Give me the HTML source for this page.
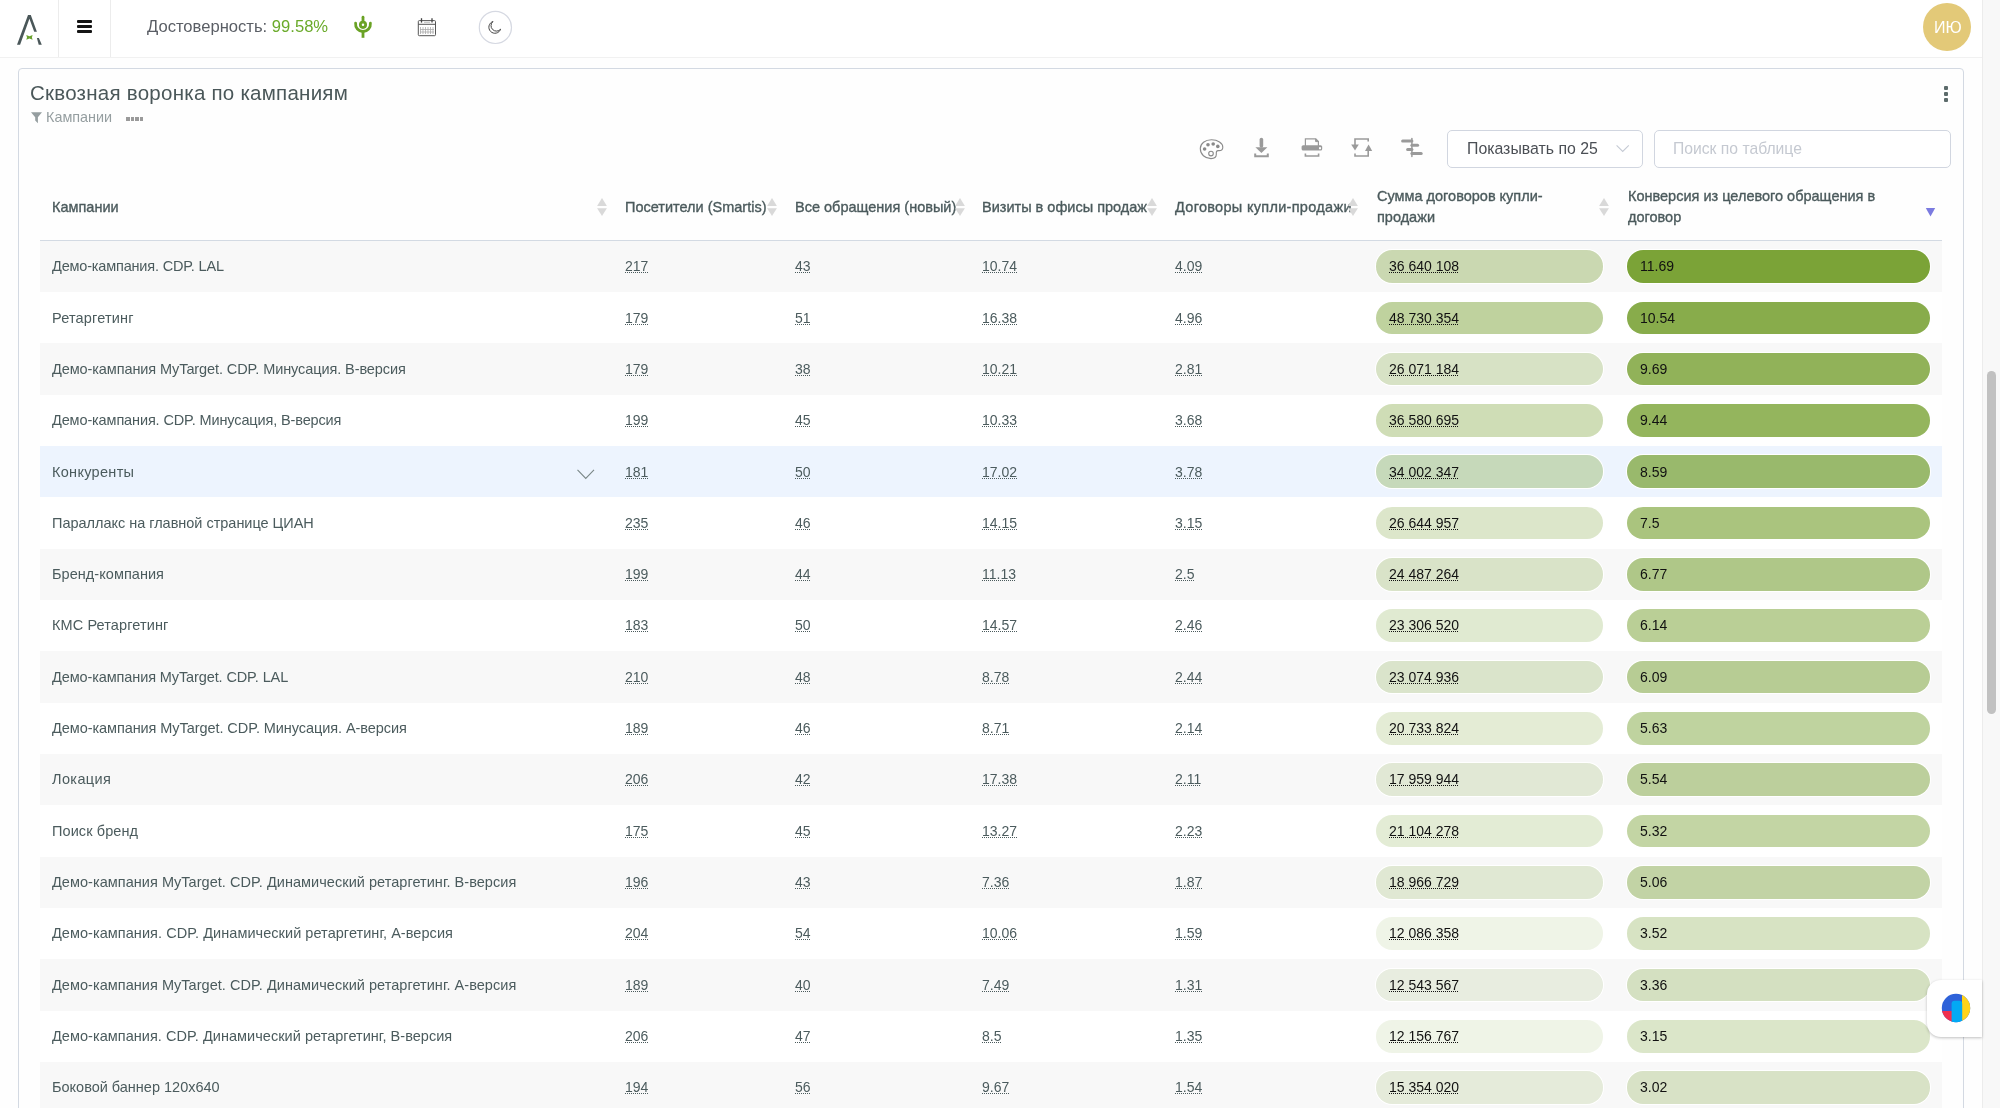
<!DOCTYPE html>
<html><head><meta charset="utf-8"><title>Сквозная воронка по кампаниям</title>
<style>
*{margin:0;padding:0;box-sizing:border-box}
html,body{width:2000px;height:1108px;overflow:hidden;background:#fefefe;font-family:"Liberation Sans", sans-serif}
.t{position:absolute;white-space:nowrap;will-change:transform}
.a{position:absolute}
.u{background:linear-gradient(to right,currentColor 50%,transparent 50%) 0 calc(100% - 1px)/2px 1px repeat-x}
</style></head>
<body>
<div class="a" style="left:0;top:0;width:1982px;height:58px;background:#fff;border-bottom:1px solid #f1f1f1"></div>
<div class="a" style="left:58px;top:0;width:1px;height:57px;background:#ececec"></div>
<div class="a" style="left:110px;top:0;width:1px;height:57px;background:#ececec"></div>
<svg class="a" style="left:0;top:0" width="60" height="57" viewBox="0 0 60 57">
<polygon points="17,44.7 28,15 30.8,15 36.9,31.7 34.2,31.7 29.42,18.83 20.1,44.7" fill="#4a5759"/>
<polygon points="36.9,38 38.9,38 41.8,44.7 38.7,44.7" fill="#4a5759"/>
<polygon points="26.3,35 29.45,36.2 32.6,35 31.9,37.4 32.6,39.8 29.45,38.6 26.3,39.8 27,37.4" fill="#6aa22e"/>
</svg>
<div class="a" style="left:77px;top:20.4px;width:14.6px;height:2.2px;background:#151515;border-radius:1px"></div>
<div class="a" style="left:77px;top:25.4px;width:14.6px;height:2.2px;background:#151515;border-radius:1px"></div>
<div class="a" style="left:77px;top:30.4px;width:14.6px;height:2.2px;background:#151515;border-radius:1px"></div>
<div class="t " style="left:146.50px;top:17px;font-size:16.6px;line-height:20px;color:#5a5e65;font-weight:400;">Достоверность: <span style="color:#6aaa2a">99.58%</span></div>
<svg class="a" style="left:340px;top:0" width="50" height="57" viewBox="340 0 50 57">
<g fill="none" stroke="#6aa225" stroke-width="2.8">
<path d="M363 17.2 V21" stroke-linecap="round"/>
<circle cx="363" cy="24.85" r="2.65"/>
<path d="M355.6 23.2 A7.45 7.45 0 1 0 370.4 23.2" stroke-linecap="round"/>
<path d="M363 32 V37.8"/>
</g></svg>
<svg class="a" style="left:410px;top:10px" width="34" height="34" viewBox="410 10 34 34">
<g fill="none" stroke="#555" stroke-width="1">
<rect x="418.3" y="20.6" width="17.2" height="15.1" rx="1"/>
<line x1="418.3" y1="24.3" x2="435.5" y2="24.3"/>
</g>
<g stroke="#444" stroke-width="1.3"><line x1="421.5" y1="18.2" x2="421.5" y2="22.6"/><line x1="432" y1="18.2" x2="432" y2="22.6"/></g>
<g stroke="#aaa" stroke-width="0.8">
<line x1="424" y1="22.3" x2="430" y2="22.3"/>
<line x1="420.5" y1="27" x2="420.5" y2="34"/><line x1="423" y1="27" x2="423" y2="34"/><line x1="425.5" y1="27" x2="425.5" y2="34"/>
<line x1="428" y1="27" x2="428" y2="34"/><line x1="430.5" y1="27" x2="430.5" y2="34"/><line x1="433" y1="27" x2="433" y2="34"/>
<line x1="420" y1="29.5" x2="434" y2="29.5"/><line x1="420" y1="32" x2="434" y2="32"/>
</g></svg>
<svg class="a" style="left:476px;top:8px" width="40" height="40" viewBox="476 8 40 40"><circle cx="495.4" cy="27.4" r="16.1" fill="none" stroke="#d6d9e2" stroke-width="1.2"/></svg>
<svg class="a" style="left:480px;top:12px" width="30" height="30" viewBox="480 12 30 30">
<path d="M493 21.5 A6.03 6.03 0 1 0 500.6 29.2 A5.43 5.43 0 1 1 493 21.5 Z" fill="none" stroke="#444" stroke-width="1"/>
</svg>
<div class="a" style="left:1922.5px;top:3.3px;width:48px;height:48px;border-radius:50%;background:#e3c978"></div>
<div class="t " style="left:1934.00px;top:18px;font-size:16px;line-height:20px;color:#ffffff;font-weight:400;">ИЮ</div>
<div class="a" style="left:1982px;top:0;width:18px;height:1108px;background:#f8f8f8;border-left:1px solid #ececec"></div>
<div class="a" style="left:1987px;top:371px;width:9px;height:343px;border-radius:4.5px;background:#c1c1c1"></div>
<div class="a" style="left:18px;top:68px;width:1946px;height:1100px;background:#fefefe;border:1px solid #d3d9e2;border-radius:4px"></div>
<div class="t " style="left:30.40px;top:80px;font-size:20.5px;line-height:26px;color:#4a5759;font-weight:400;letter-spacing:0.25px">Сквозная воронка по кампаниям</div>
<svg class="a" style="left:28px;top:108px" width="18" height="18" viewBox="28 108 18 18">
<path d="M31 112.3 H42 L37.9 117.2 V123.2 L35.2 120.6 V117.2 Z" fill="#959ea0"/></svg>
<div class="t " style="left:45.80px;top:107px;font-size:14.4px;line-height:20px;color:#959ea0;font-weight:400;">Кампании</div>
<div class="a" style="left:126.1px;top:116.7px;width:3.6px;height:4.2px;background:#9a9a9a"></div>
<div class="a" style="left:130.7px;top:116.7px;width:3.6px;height:4.2px;background:#9a9a9a"></div>
<div class="a" style="left:135.3px;top:116.7px;width:3.6px;height:4.2px;background:#9a9a9a"></div>
<div class="a" style="left:139.9px;top:116.7px;width:3.6px;height:4.2px;background:#9a9a9a"></div>
<div class="a" style="left:1944.4px;top:86.4px;width:4px;height:4px;border-radius:1px;background:#5c6b6b"></div>
<div class="a" style="left:1944.4px;top:92.1px;width:4px;height:4px;border-radius:1px;background:#5c6b6b"></div>
<div class="a" style="left:1944.4px;top:97.8px;width:4px;height:4px;border-radius:1px;background:#5c6b6b"></div>
<svg class="a" style="left:1190px;top:130px" width="240" height="35" viewBox="1190 130 240 35">
<g fill="none" stroke="#8a8a8a" stroke-width="1.1">
<path d="M1211.5 139.8 C1217.8 139.8 1222.8 143 1222.8 147.2 C1222.8 149.6 1221 150.6 1219 150.6 L1218 150.6 C1216.6 150.6 1216.3 151.6 1216.3 152.8 L1216.3 154.6 C1216.3 157.2 1214.4 158.6 1211 158.6 C1205 158.6 1200.3 154.4 1200.3 148.6 C1200.3 143.4 1205.2 139.8 1211.5 139.8 Z"/>
<circle cx="1211" cy="153.6" r="2.3"/>
</g>
<g fill="#8a8a8a"><circle cx="1204.6" cy="149" r="1.8"/><circle cx="1208" cy="144.8" r="1.8"/><circle cx="1213.2" cy="144" r="1.8"/><circle cx="1217.8" cy="146.4" r="1.8"/></g>
<g fill="#9a9a9a" stroke="none">
<rect x="1259.6" y="137.8" width="3.6" height="10" rx="1.8"/>
<polygon points="1255.4,147.2 1267.4,147.2 1261.4,152.9"/>
</g>
<path d="M1255.2 153.4 V156.2 H1267.8 V153.4" fill="none" stroke="#9a9a9a" stroke-width="2"/>
<path d="M1305.4 146 V138.8 H1315.8 L1318.4 141.4 V146" fill="none" stroke="#9a9a9a" stroke-width="1.2"/>
<path d="M1315.6 138.8 V141.6 H1318.4" fill="#9a9a9a" stroke="#9a9a9a" stroke-width="1"/>
<rect x="1301.6" y="145.2" width="20.6" height="5.4" rx="1.6" fill="#9a9a9a"/>
<rect x="1319" y="147.2" width="2" height="2" fill="#fff"/>
<path d="M1305.4 153.4 V156 H1318.6 V153.4" fill="none" stroke="#9a9a9a" stroke-width="1.6"/>
<g fill="none" stroke="#9a9a9a" stroke-width="1.6">
<path d="M1355 145 V139 H1368.2 V141.4"/>
<path d="M1355 153.4 V156 H1368.2 V150.6"/>
</g>
<g fill="#9a9a9a"><polygon points="1351.2,144.4 1358.8,144.4 1355,150.5"/><polygon points="1365,151 1372.2,151 1368.6,144.6"/></g>
<g stroke="#9a9a9a" stroke-linecap="round">
<line x1="1411.9" y1="138.4" x2="1411.9" y2="156.4" stroke-width="1.5"/>
<line x1="1402.6" y1="141.1" x2="1411.9" y2="141.1" stroke-width="3"/>
<line x1="1411.9" y1="145.2" x2="1417.6" y2="145.2" stroke-width="3"/>
<line x1="1407.6" y1="149.4" x2="1411.9" y2="149.4" stroke-width="3"/>
<line x1="1411.9" y1="153.6" x2="1421.2" y2="153.6" stroke-width="3"/>
</g>
</svg>
<div class="a" style="left:1447px;top:130px;width:196px;height:37.5px;border:1.6px solid #d1d6e0;border-radius:5px;background:#fff"></div>
<div class="t " style="left:1466.50px;top:139px;font-size:15.85px;line-height:20px;color:#4b4f55;font-weight:400;">Показывать по 25</div>
<svg class="a" style="left:1610px;top:140px" width="26" height="16" viewBox="1610 140 26 16">
<path d="M1616.6 145.4 L1622.7 151.4 L1628.8 145.4" fill="none" stroke="#c5cad4" stroke-width="1.1"/></svg>
<div class="a" style="left:1654px;top:130px;width:297px;height:37.5px;border:1.6px solid #d1d6e0;border-radius:5px;background:#fff"></div>
<div class="t " style="left:1672.60px;top:139px;font-size:15.7px;line-height:20px;color:#c5c9d1;font-weight:400;">Поиск по таблице</div>
<div class="t " style="left:51.50px;top:197px;font-size:14.5px;line-height:20px;color:#4b5a5c;font-weight:400;-webkit-text-stroke:0.35px currentColor">Кампании</div>
<svg class="a" style="left:595.7px;top:197.4px" width="12" height="20" viewBox="0 0 12 20"><polygon points="1.1,9.1 10.9,9.1 6,1" fill="#d9d9d9"/><polygon points="1.1,11.2 10.9,11.2 6,18.9" fill="#d9d9d9"/></svg>
<div class="t " style="left:625.20px;top:197px;font-size:14.5px;line-height:20px;color:#4b5a5c;font-weight:400;-webkit-text-stroke:0.35px currentColor">Посетители (Smartis)</div>
<svg class="a" style="left:766.0px;top:197.4px" width="12" height="20" viewBox="0 0 12 20"><polygon points="1.1,9.1 10.9,9.1 6,1" fill="#d9d9d9"/><polygon points="1.1,11.2 10.9,11.2 6,18.9" fill="#d9d9d9"/></svg>
<div class="t " style="left:795.40px;top:197px;font-size:14.5px;line-height:20px;color:#4b5a5c;font-weight:400;-webkit-text-stroke:0.35px currentColor">Все обращения (новый)</div>
<svg class="a" style="left:953.5px;top:197.4px" width="12" height="20" viewBox="0 0 12 20"><polygon points="1.1,9.1 10.9,9.1 6,1" fill="#d9d9d9"/><polygon points="1.1,11.2 10.9,11.2 6,18.9" fill="#d9d9d9"/></svg>
<div class="t " style="left:981.60px;top:197px;font-size:14.5px;line-height:20px;color:#4b5a5c;font-weight:400;-webkit-text-stroke:0.35px currentColor">Визиты в офисы продаж</div>
<svg class="a" style="left:1146.0px;top:197.4px" width="12" height="20" viewBox="0 0 12 20"><polygon points="1.1,9.1 10.9,9.1 6,1" fill="#d9d9d9"/><polygon points="1.1,11.2 10.9,11.2 6,18.9" fill="#d9d9d9"/></svg>
<div class="t " style="left:1175.10px;top:197px;font-size:14.5px;line-height:20px;color:#4b5a5c;font-weight:400;-webkit-text-stroke:0.35px currentColor;letter-spacing:0.3px">Договоры купли-продажи</div>
<svg class="a" style="left:1347.2px;top:197.4px" width="12" height="20" viewBox="0 0 12 20"><polygon points="1.1,9.1 10.9,9.1 6,1" fill="#d9d9d9"/><polygon points="1.1,11.2 10.9,11.2 6,18.9" fill="#d9d9d9"/></svg>
<div class="t " style="left:1376.80px;top:186px;font-size:14.5px;line-height:20px;color:#4b5a5c;font-weight:400;-webkit-text-stroke:0.35px currentColor">Сумма договоров купли-</div>
<div class="t " style="left:1376.80px;top:207px;font-size:14.5px;line-height:20px;color:#4b5a5c;font-weight:400;-webkit-text-stroke:0.35px currentColor">продажи</div>
<svg class="a" style="left:1598.0px;top:197.4px" width="12" height="20" viewBox="0 0 12 20"><polygon points="1.1,9.1 10.9,9.1 6,1" fill="#d9d9d9"/><polygon points="1.1,11.2 10.9,11.2 6,18.9" fill="#d9d9d9"/></svg>
<div class="t " style="left:1628.00px;top:186px;font-size:14.5px;line-height:20px;color:#4b5a5c;font-weight:400;-webkit-text-stroke:0.35px currentColor">Конверсия из целевого обращения в</div>
<div class="t " style="left:1628.00px;top:207px;font-size:14.5px;line-height:20px;color:#4b5a5c;font-weight:400;-webkit-text-stroke:0.35px currentColor">договор</div>
<svg class="a" style="left:1924px;top:206px" width="14" height="12" viewBox="1924 206 14 12">
<polygon points="1925.8,208 1935.2,208 1930.5,216.4" fill="#7b7be0"/></svg>
<div class="a" style="left:40px;top:240px;width:1902px;height:1px;background:#d3dae3"></div>
<div class="a" style="left:40px;top:240.80px;width:1902px;height:51.32px;background:#f8f8f8"></div>
<div class="t " style="left:52.00px;top:256px;font-size:14.5px;line-height:20px;color:#4b5b5d;font-weight:400;letter-spacing:-0.182px">Демо-кампания. CDP. LAL</div>
<div class="t " style="left:625.00px;top:256px;font-size:14px;line-height:20px;color:#4b5b5d;font-weight:400;"><span class="u">217</span></div>
<div class="t " style="left:795.00px;top:256px;font-size:14px;line-height:20px;color:#4b5b5d;font-weight:400;"><span class="u">43</span></div>
<div class="t " style="left:981.80px;top:256px;font-size:14px;line-height:20px;color:#4b5b5d;font-weight:400;"><span class="u">10.74</span></div>
<div class="t " style="left:1174.80px;top:256px;font-size:14px;line-height:20px;color:#4b5b5d;font-weight:400;"><span class="u">4.09</span></div>
<div class="a" style="left:1375.9px;top:250.20px;width:227.5px;height:32.5px;border-radius:16.25px;background:rgba(123,163,55,0.366);box-shadow:0 0 0 1px #fff"></div>
<div class="a" style="left:1627.4px;top:250.20px;width:302.5px;height:32.5px;border-radius:16.25px;background:rgba(123,163,55,1.000);box-shadow:0 0 0 1px #fff"></div>
<div class="t " style="left:1388.60px;top:256px;font-size:14px;line-height:20px;color:#111;font-weight:400;"><span class="u">36 640 108</span></div>
<div class="t " style="left:1639.60px;top:256px;font-size:14px;line-height:20px;color:#111;font-weight:400;">11.69</div>
<div class="a" style="left:40px;top:292.12px;width:1902px;height:51.32px;background:#ffffff"></div>
<div class="t " style="left:52.00px;top:308px;font-size:14.5px;line-height:20px;color:#4b5b5d;font-weight:400;letter-spacing:0.170px">Ретаргетинг</div>
<div class="t " style="left:625.00px;top:308px;font-size:14px;line-height:20px;color:#4b5b5d;font-weight:400;"><span class="u">179</span></div>
<div class="t " style="left:795.00px;top:308px;font-size:14px;line-height:20px;color:#4b5b5d;font-weight:400;"><span class="u">51</span></div>
<div class="t " style="left:981.80px;top:308px;font-size:14px;line-height:20px;color:#4b5b5d;font-weight:400;"><span class="u">16.38</span></div>
<div class="t " style="left:1174.80px;top:308px;font-size:14px;line-height:20px;color:#4b5b5d;font-weight:400;"><span class="u">4.96</span></div>
<div class="a" style="left:1375.9px;top:301.52px;width:227.5px;height:32.5px;border-radius:16.25px;background:rgba(123,163,55,0.487);box-shadow:0 0 0 1px #fff"></div>
<div class="a" style="left:1627.4px;top:301.52px;width:302.5px;height:32.5px;border-radius:16.25px;background:rgba(123,163,55,0.902);box-shadow:0 0 0 1px #fff"></div>
<div class="t " style="left:1388.60px;top:308px;font-size:14px;line-height:20px;color:#111;font-weight:400;"><span class="u">48 730 354</span></div>
<div class="t " style="left:1639.60px;top:308px;font-size:14px;line-height:20px;color:#111;font-weight:400;">10.54</div>
<div class="a" style="left:40px;top:343.44px;width:1902px;height:51.32px;background:#f8f8f8"></div>
<div class="t " style="left:52.00px;top:359px;font-size:14.5px;line-height:20px;color:#4b5b5d;font-weight:400;letter-spacing:-0.091px">Демо-кампания MyTarget. CDP. Минусация. B-версия</div>
<div class="t " style="left:625.00px;top:359px;font-size:14px;line-height:20px;color:#4b5b5d;font-weight:400;"><span class="u">179</span></div>
<div class="t " style="left:795.00px;top:359px;font-size:14px;line-height:20px;color:#4b5b5d;font-weight:400;"><span class="u">38</span></div>
<div class="t " style="left:981.80px;top:359px;font-size:14px;line-height:20px;color:#4b5b5d;font-weight:400;"><span class="u">10.21</span></div>
<div class="t " style="left:1174.80px;top:359px;font-size:14px;line-height:20px;color:#4b5b5d;font-weight:400;"><span class="u">2.81</span></div>
<div class="a" style="left:1375.9px;top:352.84px;width:227.5px;height:32.5px;border-radius:16.25px;background:rgba(123,163,55,0.261);box-shadow:0 0 0 1px #fff"></div>
<div class="a" style="left:1627.4px;top:352.84px;width:302.5px;height:32.5px;border-radius:16.25px;background:rgba(123,163,55,0.829);box-shadow:0 0 0 1px #fff"></div>
<div class="t " style="left:1388.60px;top:359px;font-size:14px;line-height:20px;color:#111;font-weight:400;"><span class="u">26 071 184</span></div>
<div class="t " style="left:1639.60px;top:359px;font-size:14px;line-height:20px;color:#111;font-weight:400;">9.69</div>
<div class="a" style="left:40px;top:394.76px;width:1902px;height:51.32px;background:#ffffff"></div>
<div class="t " style="left:52.00px;top:410px;font-size:14.5px;line-height:20px;color:#4b5b5d;font-weight:400;letter-spacing:-0.132px">Демо-кампания. CDP. Минусация, B-версия</div>
<div class="t " style="left:625.00px;top:410px;font-size:14px;line-height:20px;color:#4b5b5d;font-weight:400;"><span class="u">199</span></div>
<div class="t " style="left:795.00px;top:410px;font-size:14px;line-height:20px;color:#4b5b5d;font-weight:400;"><span class="u">45</span></div>
<div class="t " style="left:981.80px;top:410px;font-size:14px;line-height:20px;color:#4b5b5d;font-weight:400;"><span class="u">10.33</span></div>
<div class="t " style="left:1174.80px;top:410px;font-size:14px;line-height:20px;color:#4b5b5d;font-weight:400;"><span class="u">3.68</span></div>
<div class="a" style="left:1375.9px;top:404.16px;width:227.5px;height:32.5px;border-radius:16.25px;background:rgba(123,163,55,0.366);box-shadow:0 0 0 1px #fff"></div>
<div class="a" style="left:1627.4px;top:404.16px;width:302.5px;height:32.5px;border-radius:16.25px;background:rgba(123,163,55,0.808);box-shadow:0 0 0 1px #fff"></div>
<div class="t " style="left:1388.60px;top:410px;font-size:14px;line-height:20px;color:#111;font-weight:400;"><span class="u">36 580 695</span></div>
<div class="t " style="left:1639.60px;top:410px;font-size:14px;line-height:20px;color:#111;font-weight:400;">9.44</div>
<div class="a" style="left:40px;top:446.08px;width:1902px;height:51.32px;background:#edf4fe"></div>
<div class="t " style="left:52.00px;top:462px;font-size:14.5px;line-height:20px;color:#4b5b5d;font-weight:400;letter-spacing:0.300px">Конкуренты</div>
<div class="t " style="left:625.00px;top:462px;font-size:14px;line-height:20px;color:#4b5b5d;font-weight:400;"><span class="u">181</span></div>
<div class="t " style="left:795.00px;top:462px;font-size:14px;line-height:20px;color:#4b5b5d;font-weight:400;"><span class="u">50</span></div>
<div class="t " style="left:981.80px;top:462px;font-size:14px;line-height:20px;color:#4b5b5d;font-weight:400;"><span class="u">17.02</span></div>
<div class="t " style="left:1174.80px;top:462px;font-size:14px;line-height:20px;color:#4b5b5d;font-weight:400;"><span class="u">3.78</span></div>
<svg class="a" style="left:575px;top:466.1px" width="22" height="14" viewBox="575 466.1 22 14">
<path d="M577.5 470.08 L585.75 478.58 L594 470.08" fill="none" stroke="#7a8787" stroke-width="1.1"/></svg>
<div class="a" style="left:1375.9px;top:455.48px;width:227.5px;height:32.5px;border-radius:16.25px;background:rgba(123,163,55,0.340);box-shadow:0 0 0 1px #fff"></div>
<div class="a" style="left:1627.4px;top:455.48px;width:302.5px;height:32.5px;border-radius:16.25px;background:rgba(123,163,55,0.735);box-shadow:0 0 0 1px #fff"></div>
<div class="t " style="left:1388.60px;top:462px;font-size:14px;line-height:20px;color:#111;font-weight:400;"><span class="u">34 002 347</span></div>
<div class="t " style="left:1639.60px;top:462px;font-size:14px;line-height:20px;color:#111;font-weight:400;">8.59</div>
<div class="a" style="left:40px;top:497.40px;width:1902px;height:51.32px;background:#ffffff"></div>
<div class="t " style="left:52.00px;top:513px;font-size:14.5px;line-height:20px;color:#4b5b5d;font-weight:400;letter-spacing:-0.021px">Параллакс на главной странице ЦИАН</div>
<div class="t " style="left:625.00px;top:513px;font-size:14px;line-height:20px;color:#4b5b5d;font-weight:400;"><span class="u">235</span></div>
<div class="t " style="left:795.00px;top:513px;font-size:14px;line-height:20px;color:#4b5b5d;font-weight:400;"><span class="u">46</span></div>
<div class="t " style="left:981.80px;top:513px;font-size:14px;line-height:20px;color:#4b5b5d;font-weight:400;"><span class="u">14.15</span></div>
<div class="t " style="left:1174.80px;top:513px;font-size:14px;line-height:20px;color:#4b5b5d;font-weight:400;"><span class="u">3.15</span></div>
<div class="a" style="left:1375.9px;top:506.80px;width:227.5px;height:32.5px;border-radius:16.25px;background:rgba(123,163,55,0.266);box-shadow:0 0 0 1px #fff"></div>
<div class="a" style="left:1627.4px;top:506.80px;width:302.5px;height:32.5px;border-radius:16.25px;background:rgba(123,163,55,0.642);box-shadow:0 0 0 1px #fff"></div>
<div class="t " style="left:1388.60px;top:513px;font-size:14px;line-height:20px;color:#111;font-weight:400;"><span class="u">26 644 957</span></div>
<div class="t " style="left:1639.60px;top:513px;font-size:14px;line-height:20px;color:#111;font-weight:400;">7.5</div>
<div class="a" style="left:40px;top:548.72px;width:1902px;height:51.32px;background:#f8f8f8"></div>
<div class="t " style="left:52.00px;top:564px;font-size:14.5px;line-height:20px;color:#4b5b5d;font-weight:400;letter-spacing:0.046px">Бренд-компания</div>
<div class="t " style="left:625.00px;top:564px;font-size:14px;line-height:20px;color:#4b5b5d;font-weight:400;"><span class="u">199</span></div>
<div class="t " style="left:795.00px;top:564px;font-size:14px;line-height:20px;color:#4b5b5d;font-weight:400;"><span class="u">44</span></div>
<div class="t " style="left:981.80px;top:564px;font-size:14px;line-height:20px;color:#4b5b5d;font-weight:400;"><span class="u">11.13</span></div>
<div class="t " style="left:1174.80px;top:564px;font-size:14px;line-height:20px;color:#4b5b5d;font-weight:400;"><span class="u">2.5</span></div>
<div class="a" style="left:1375.9px;top:558.12px;width:227.5px;height:32.5px;border-radius:16.25px;background:rgba(123,163,55,0.245);box-shadow:0 0 0 1px #fff"></div>
<div class="a" style="left:1627.4px;top:558.12px;width:302.5px;height:32.5px;border-radius:16.25px;background:rgba(123,163,55,0.579);box-shadow:0 0 0 1px #fff"></div>
<div class="t " style="left:1388.60px;top:564px;font-size:14px;line-height:20px;color:#111;font-weight:400;"><span class="u">24 487 264</span></div>
<div class="t " style="left:1639.60px;top:564px;font-size:14px;line-height:20px;color:#111;font-weight:400;">6.77</div>
<div class="a" style="left:40px;top:600.04px;width:1902px;height:51.32px;background:#ffffff"></div>
<div class="t " style="left:52.00px;top:615px;font-size:14.5px;line-height:20px;color:#4b5b5d;font-weight:400;letter-spacing:0.107px">КМС Ретаргетинг</div>
<div class="t " style="left:625.00px;top:615px;font-size:14px;line-height:20px;color:#4b5b5d;font-weight:400;"><span class="u">183</span></div>
<div class="t " style="left:795.00px;top:615px;font-size:14px;line-height:20px;color:#4b5b5d;font-weight:400;"><span class="u">50</span></div>
<div class="t " style="left:981.80px;top:615px;font-size:14px;line-height:20px;color:#4b5b5d;font-weight:400;"><span class="u">14.57</span></div>
<div class="t " style="left:1174.80px;top:615px;font-size:14px;line-height:20px;color:#4b5b5d;font-weight:400;"><span class="u">2.46</span></div>
<div class="a" style="left:1375.9px;top:609.44px;width:227.5px;height:32.5px;border-radius:16.25px;background:rgba(123,163,55,0.233);box-shadow:0 0 0 1px #fff"></div>
<div class="a" style="left:1627.4px;top:609.44px;width:302.5px;height:32.5px;border-radius:16.25px;background:rgba(123,163,55,0.525);box-shadow:0 0 0 1px #fff"></div>
<div class="t " style="left:1388.60px;top:615px;font-size:14px;line-height:20px;color:#111;font-weight:400;"><span class="u">23 306 520</span></div>
<div class="t " style="left:1639.60px;top:615px;font-size:14px;line-height:20px;color:#111;font-weight:400;">6.14</div>
<div class="a" style="left:40px;top:651.36px;width:1902px;height:51.32px;background:#f8f8f8"></div>
<div class="t " style="left:52.00px;top:667px;font-size:14.5px;line-height:20px;color:#4b5b5d;font-weight:400;letter-spacing:-0.110px">Демо-кампания MyTarget. CDP. LAL</div>
<div class="t " style="left:625.00px;top:667px;font-size:14px;line-height:20px;color:#4b5b5d;font-weight:400;"><span class="u">210</span></div>
<div class="t " style="left:795.00px;top:667px;font-size:14px;line-height:20px;color:#4b5b5d;font-weight:400;"><span class="u">48</span></div>
<div class="t " style="left:981.80px;top:667px;font-size:14px;line-height:20px;color:#4b5b5d;font-weight:400;"><span class="u">8.78</span></div>
<div class="t " style="left:1174.80px;top:667px;font-size:14px;line-height:20px;color:#4b5b5d;font-weight:400;"><span class="u">2.44</span></div>
<div class="a" style="left:1375.9px;top:660.76px;width:227.5px;height:32.5px;border-radius:16.25px;background:rgba(123,163,55,0.231);box-shadow:0 0 0 1px #fff"></div>
<div class="a" style="left:1627.4px;top:660.76px;width:302.5px;height:32.5px;border-radius:16.25px;background:rgba(123,163,55,0.521);box-shadow:0 0 0 1px #fff"></div>
<div class="t " style="left:1388.60px;top:667px;font-size:14px;line-height:20px;color:#111;font-weight:400;"><span class="u">23 074 936</span></div>
<div class="t " style="left:1639.60px;top:667px;font-size:14px;line-height:20px;color:#111;font-weight:400;">6.09</div>
<div class="a" style="left:40px;top:702.68px;width:1902px;height:51.32px;background:#ffffff"></div>
<div class="t " style="left:52.00px;top:718px;font-size:14.5px;line-height:20px;color:#4b5b5d;font-weight:400;letter-spacing:-0.070px">Демо-кампания MyTarget. CDP. Минусация. A-версия</div>
<div class="t " style="left:625.00px;top:718px;font-size:14px;line-height:20px;color:#4b5b5d;font-weight:400;"><span class="u">189</span></div>
<div class="t " style="left:795.00px;top:718px;font-size:14px;line-height:20px;color:#4b5b5d;font-weight:400;"><span class="u">46</span></div>
<div class="t " style="left:981.80px;top:718px;font-size:14px;line-height:20px;color:#4b5b5d;font-weight:400;"><span class="u">8.71</span></div>
<div class="t " style="left:1174.80px;top:718px;font-size:14px;line-height:20px;color:#4b5b5d;font-weight:400;"><span class="u">2.14</span></div>
<div class="a" style="left:1375.9px;top:712.08px;width:227.5px;height:32.5px;border-radius:16.25px;background:rgba(123,163,55,0.207);box-shadow:0 0 0 1px #fff"></div>
<div class="a" style="left:1627.4px;top:712.08px;width:302.5px;height:32.5px;border-radius:16.25px;background:rgba(123,163,55,0.482);box-shadow:0 0 0 1px #fff"></div>
<div class="t " style="left:1388.60px;top:718px;font-size:14px;line-height:20px;color:#111;font-weight:400;"><span class="u">20 733 824</span></div>
<div class="t " style="left:1639.60px;top:718px;font-size:14px;line-height:20px;color:#111;font-weight:400;">5.63</div>
<div class="a" style="left:40px;top:754.00px;width:1902px;height:51.32px;background:#f8f8f8"></div>
<div class="t " style="left:52.00px;top:769px;font-size:14.5px;line-height:20px;color:#4b5b5d;font-weight:400;letter-spacing:0.383px">Локация</div>
<div class="t " style="left:625.00px;top:769px;font-size:14px;line-height:20px;color:#4b5b5d;font-weight:400;"><span class="u">206</span></div>
<div class="t " style="left:795.00px;top:769px;font-size:14px;line-height:20px;color:#4b5b5d;font-weight:400;"><span class="u">42</span></div>
<div class="t " style="left:981.80px;top:769px;font-size:14px;line-height:20px;color:#4b5b5d;font-weight:400;"><span class="u">17.38</span></div>
<div class="t " style="left:1174.80px;top:769px;font-size:14px;line-height:20px;color:#4b5b5d;font-weight:400;"><span class="u">2.11</span></div>
<div class="a" style="left:1375.9px;top:763.40px;width:227.5px;height:32.5px;border-radius:16.25px;background:rgba(123,163,55,0.180);box-shadow:0 0 0 1px #fff"></div>
<div class="a" style="left:1627.4px;top:763.40px;width:302.5px;height:32.5px;border-radius:16.25px;background:rgba(123,163,55,0.474);box-shadow:0 0 0 1px #fff"></div>
<div class="t " style="left:1388.60px;top:769px;font-size:14px;line-height:20px;color:#111;font-weight:400;"><span class="u">17 959 944</span></div>
<div class="t " style="left:1639.60px;top:769px;font-size:14px;line-height:20px;color:#111;font-weight:400;">5.54</div>
<div class="a" style="left:40px;top:805.32px;width:1902px;height:51.32px;background:#ffffff"></div>
<div class="t " style="left:52.00px;top:821px;font-size:14.5px;line-height:20px;color:#4b5b5d;font-weight:400;letter-spacing:0.090px">Поиск бренд</div>
<div class="t " style="left:625.00px;top:821px;font-size:14px;line-height:20px;color:#4b5b5d;font-weight:400;"><span class="u">175</span></div>
<div class="t " style="left:795.00px;top:821px;font-size:14px;line-height:20px;color:#4b5b5d;font-weight:400;"><span class="u">45</span></div>
<div class="t " style="left:981.80px;top:821px;font-size:14px;line-height:20px;color:#4b5b5d;font-weight:400;"><span class="u">13.27</span></div>
<div class="t " style="left:1174.80px;top:821px;font-size:14px;line-height:20px;color:#4b5b5d;font-weight:400;"><span class="u">2.23</span></div>
<div class="a" style="left:1375.9px;top:814.72px;width:227.5px;height:32.5px;border-radius:16.25px;background:rgba(123,163,55,0.211);box-shadow:0 0 0 1px #fff"></div>
<div class="a" style="left:1627.4px;top:814.72px;width:302.5px;height:32.5px;border-radius:16.25px;background:rgba(123,163,55,0.455);box-shadow:0 0 0 1px #fff"></div>
<div class="t " style="left:1388.60px;top:821px;font-size:14px;line-height:20px;color:#111;font-weight:400;"><span class="u">21 104 278</span></div>
<div class="t " style="left:1639.60px;top:821px;font-size:14px;line-height:20px;color:#111;font-weight:400;">5.32</div>
<div class="a" style="left:40px;top:856.64px;width:1902px;height:51.32px;background:#f8f8f8"></div>
<div class="t " style="left:52.00px;top:872px;font-size:14.5px;line-height:20px;color:#4b5b5d;font-weight:400;letter-spacing:0.039px">Демо-кампания MyTarget. CDP. Динамический ретаргетинг. B-версия</div>
<div class="t " style="left:625.00px;top:872px;font-size:14px;line-height:20px;color:#4b5b5d;font-weight:400;"><span class="u">196</span></div>
<div class="t " style="left:795.00px;top:872px;font-size:14px;line-height:20px;color:#4b5b5d;font-weight:400;"><span class="u">43</span></div>
<div class="t " style="left:981.80px;top:872px;font-size:14px;line-height:20px;color:#4b5b5d;font-weight:400;"><span class="u">7.36</span></div>
<div class="t " style="left:1174.80px;top:872px;font-size:14px;line-height:20px;color:#4b5b5d;font-weight:400;"><span class="u">1.87</span></div>
<div class="a" style="left:1375.9px;top:866.04px;width:227.5px;height:32.5px;border-radius:16.25px;background:rgba(123,163,55,0.190);box-shadow:0 0 0 1px #fff"></div>
<div class="a" style="left:1627.4px;top:866.04px;width:302.5px;height:32.5px;border-radius:16.25px;background:rgba(123,163,55,0.433);box-shadow:0 0 0 1px #fff"></div>
<div class="t " style="left:1388.60px;top:872px;font-size:14px;line-height:20px;color:#111;font-weight:400;"><span class="u">18 966 729</span></div>
<div class="t " style="left:1639.60px;top:872px;font-size:14px;line-height:20px;color:#111;font-weight:400;">5.06</div>
<div class="a" style="left:40px;top:907.96px;width:1902px;height:51.32px;background:#ffffff"></div>
<div class="t " style="left:52.00px;top:923px;font-size:14.5px;line-height:20px;color:#4b5b5d;font-weight:400;letter-spacing:0.051px">Демо-кампания. CDP. Динамический ретаргетинг, A-версия</div>
<div class="t " style="left:625.00px;top:923px;font-size:14px;line-height:20px;color:#4b5b5d;font-weight:400;"><span class="u">204</span></div>
<div class="t " style="left:795.00px;top:923px;font-size:14px;line-height:20px;color:#4b5b5d;font-weight:400;"><span class="u">54</span></div>
<div class="t " style="left:981.80px;top:923px;font-size:14px;line-height:20px;color:#4b5b5d;font-weight:400;"><span class="u">10.06</span></div>
<div class="t " style="left:1174.80px;top:923px;font-size:14px;line-height:20px;color:#4b5b5d;font-weight:400;"><span class="u">1.59</span></div>
<div class="a" style="left:1375.9px;top:917.36px;width:227.5px;height:32.5px;border-radius:16.25px;background:rgba(123,163,55,0.121);box-shadow:0 0 0 1px #fff"></div>
<div class="a" style="left:1627.4px;top:917.36px;width:302.5px;height:32.5px;border-radius:16.25px;background:rgba(123,163,55,0.301);box-shadow:0 0 0 1px #fff"></div>
<div class="t " style="left:1388.60px;top:923px;font-size:14px;line-height:20px;color:#111;font-weight:400;"><span class="u">12 086 358</span></div>
<div class="t " style="left:1639.60px;top:923px;font-size:14px;line-height:20px;color:#111;font-weight:400;">3.52</div>
<div class="a" style="left:40px;top:959.28px;width:1902px;height:51.32px;background:#f8f8f8"></div>
<div class="t " style="left:52.00px;top:975px;font-size:14.5px;line-height:20px;color:#4b5b5d;font-weight:400;letter-spacing:0.039px">Демо-кампания MyTarget. CDP. Динамический ретаргетинг. A-версия</div>
<div class="t " style="left:625.00px;top:975px;font-size:14px;line-height:20px;color:#4b5b5d;font-weight:400;"><span class="u">189</span></div>
<div class="t " style="left:795.00px;top:975px;font-size:14px;line-height:20px;color:#4b5b5d;font-weight:400;"><span class="u">40</span></div>
<div class="t " style="left:981.80px;top:975px;font-size:14px;line-height:20px;color:#4b5b5d;font-weight:400;"><span class="u">7.49</span></div>
<div class="t " style="left:1174.80px;top:975px;font-size:14px;line-height:20px;color:#4b5b5d;font-weight:400;"><span class="u">1.31</span></div>
<div class="a" style="left:1375.9px;top:968.68px;width:227.5px;height:32.5px;border-radius:16.25px;background:rgba(123,163,55,0.125);box-shadow:0 0 0 1px #fff"></div>
<div class="a" style="left:1627.4px;top:968.68px;width:302.5px;height:32.5px;border-radius:16.25px;background:rgba(123,163,55,0.287);box-shadow:0 0 0 1px #fff"></div>
<div class="t " style="left:1388.60px;top:975px;font-size:14px;line-height:20px;color:#111;font-weight:400;"><span class="u">12 543 567</span></div>
<div class="t " style="left:1639.60px;top:975px;font-size:14px;line-height:20px;color:#111;font-weight:400;">3.36</div>
<div class="a" style="left:40px;top:1010.60px;width:1902px;height:51.32px;background:#ffffff"></div>
<div class="t " style="left:52.00px;top:1026px;font-size:14.5px;line-height:20px;color:#4b5b5d;font-weight:400;letter-spacing:0.038px">Демо-кампания. CDP. Динамический ретаргетинг, B-версия</div>
<div class="t " style="left:625.00px;top:1026px;font-size:14px;line-height:20px;color:#4b5b5d;font-weight:400;"><span class="u">206</span></div>
<div class="t " style="left:795.00px;top:1026px;font-size:14px;line-height:20px;color:#4b5b5d;font-weight:400;"><span class="u">47</span></div>
<div class="t " style="left:981.80px;top:1026px;font-size:14px;line-height:20px;color:#4b5b5d;font-weight:400;"><span class="u">8.5</span></div>
<div class="t " style="left:1174.80px;top:1026px;font-size:14px;line-height:20px;color:#4b5b5d;font-weight:400;"><span class="u">1.35</span></div>
<div class="a" style="left:1375.9px;top:1020.00px;width:227.5px;height:32.5px;border-radius:16.25px;background:rgba(123,163,55,0.122);box-shadow:0 0 0 1px #fff"></div>
<div class="a" style="left:1627.4px;top:1020.00px;width:302.5px;height:32.5px;border-radius:16.25px;background:rgba(123,163,55,0.269);box-shadow:0 0 0 1px #fff"></div>
<div class="t " style="left:1388.60px;top:1026px;font-size:14px;line-height:20px;color:#111;font-weight:400;"><span class="u">12 156 767</span></div>
<div class="t " style="left:1639.60px;top:1026px;font-size:14px;line-height:20px;color:#111;font-weight:400;">3.15</div>
<div class="a" style="left:40px;top:1061.92px;width:1902px;height:51.32px;background:#f8f8f8"></div>
<div class="t " style="left:52.00px;top:1077px;font-size:14.5px;line-height:20px;color:#4b5b5d;font-weight:400;letter-spacing:-0.005px">Боковой баннер 120x640</div>
<div class="t " style="left:625.00px;top:1077px;font-size:14px;line-height:20px;color:#4b5b5d;font-weight:400;"><span class="u">194</span></div>
<div class="t " style="left:795.00px;top:1077px;font-size:14px;line-height:20px;color:#4b5b5d;font-weight:400;"><span class="u">56</span></div>
<div class="t " style="left:981.80px;top:1077px;font-size:14px;line-height:20px;color:#4b5b5d;font-weight:400;"><span class="u">9.67</span></div>
<div class="t " style="left:1174.80px;top:1077px;font-size:14px;line-height:20px;color:#4b5b5d;font-weight:400;"><span class="u">1.54</span></div>
<div class="a" style="left:1375.9px;top:1071.32px;width:227.5px;height:32.5px;border-radius:16.25px;background:rgba(123,163,55,0.154);box-shadow:0 0 0 1px #fff"></div>
<div class="a" style="left:1627.4px;top:1071.32px;width:302.5px;height:32.5px;border-radius:16.25px;background:rgba(123,163,55,0.258);box-shadow:0 0 0 1px #fff"></div>
<div class="t " style="left:1388.60px;top:1077px;font-size:14px;line-height:20px;color:#111;font-weight:400;"><span class="u">15 354 020</span></div>
<div class="t " style="left:1639.60px;top:1077px;font-size:14px;line-height:20px;color:#111;font-weight:400;">3.02</div>
<div class="a" style="left:1927px;top:979.8px;width:55px;height:57.3px;border-radius:14px 0 0 14px;background:#fff;box-shadow:0 1px 3px rgba(0,0,0,0.25)"></div>
<svg class="a" style="left:1940px;top:992px" width="32" height="32" viewBox="1940 992 32 32">
<defs><clipPath id="cc"><circle cx="1956" cy="1008" r="14.2"/></clipPath></defs>
<g clip-path="url(#cc)">
<rect x="1940" y="992" width="32" height="32" fill="#2e62d9"/>
<rect x="1940" y="1011" width="12" height="16" fill="#f0304f"/>
<rect x="1962" y="992" width="12" height="32" fill="#ffd31a"/>
<rect x="1951.6" y="1000.8" width="10.6" height="24" rx="3" fill="#03a9f4"/>
</g></svg>
</body></html>
